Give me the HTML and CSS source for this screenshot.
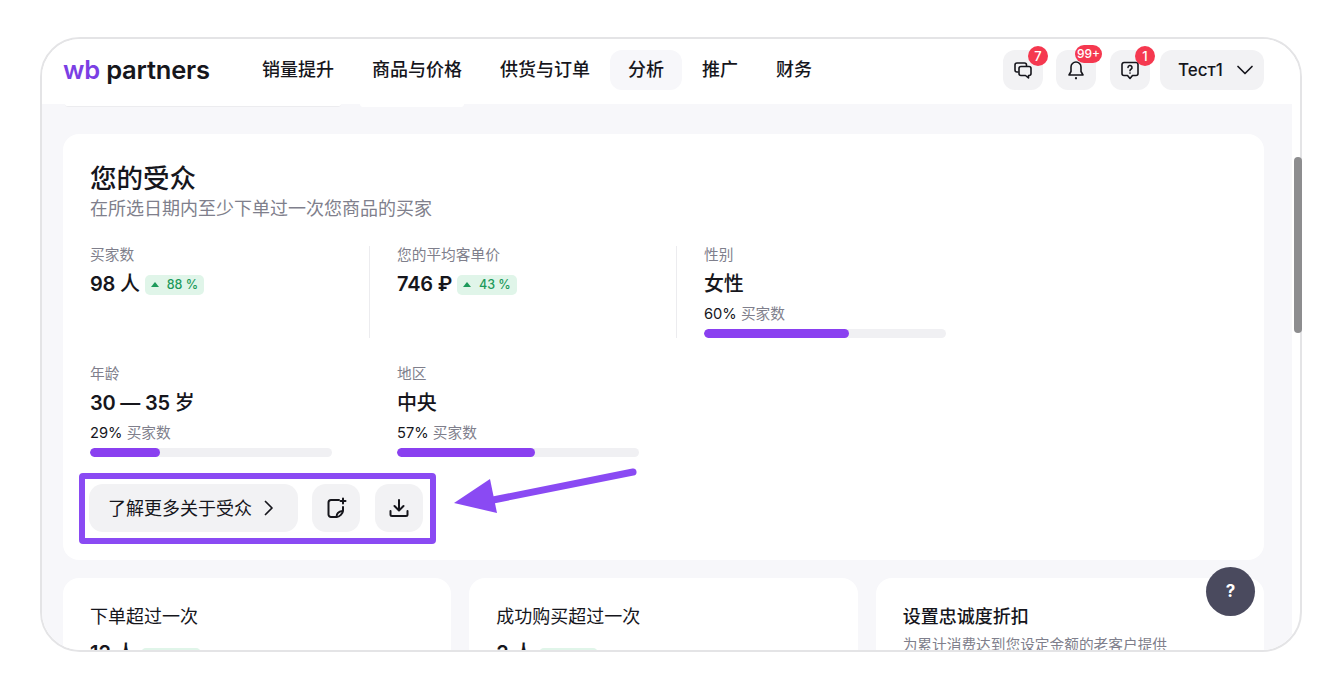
FILE: index.html
```html
<!DOCTYPE html>
<html lang="zh">

<head>
    <meta charset="UTF-8">
    <meta name="viewport" content="width=device-width, initial-scale=1.0">
    <title>WB Partners - 您的受众</title>
    <link rel="stylesheet" href="styles.css">
</head>

<body>
    <div class="window">
        <header class="topbar">
            <div class="logo"><span class="logo-wb">wb</span> partners</div>
            <nav class="nav">
                <a class="nav-item">销量提升</a>
                <a class="nav-item">商品与价格</a>
                <a class="nav-item">供货与订单</a>
                <a class="nav-item active">分析</a>
                <a class="nav-item">推广</a>
                <a class="nav-item">财务</a>
            </nav>
            <div class="top-actions">
                <div class="icon-btn chat-btn">
                    <svg width="20" height="20" viewBox="0 0 20 20" fill="none" stroke="#16161c" stroke-width="1.6" stroke-linejoin="round" stroke-linecap="round">
                        <path d="M13.5 6V5a2 2 0 0 0-2-2H4a2 2 0 0 0-2 2v5a2 2 0 0 0 2 2h1" />
                        <path d="M8 6.5h8a2 2 0 0 1 2 2v5a2 2 0 0 1-2 2h-.5V18l-3-2.500H8a2 2 0 0 1-2-2v-5a2 2 0 0 1 2-2z" />
                    </svg>
                    <span class="badge">7</span>
                </div>
                <div class="icon-btn bell-btn">
                    <svg width="20" height="20" viewBox="0 0 20 20" fill="none" stroke="#16161c" stroke-width="1.6" stroke-linejoin="round" stroke-linecap="round">
                        <path d="M10 2a5 5 0 0 0-5 5v4.500L3 15h14l-2-3.500V7a5 5 0 0 0-5-5z" />
                        <path d="M10 18.200v.1" stroke-width="2.200" />
                    </svg>
                    <span class="badge wide">99+</span>
                </div>
                <div class="icon-btn help-btn">
                    <svg width="20" height="20" viewBox="0 0 20 20" fill="none" stroke="#16161c" stroke-width="1.6" stroke-linejoin="round" stroke-linecap="round">
                        <path d="M4 2.500h12a2 2 0 0 1 2 2v9a2 2 0 0 1-2 2h-3.500L10 18.500l-2.500-3H4a2 2 0 0 1-2-2v-9a2 2 0 0 1 2-2z" />
                        <path d="M8 7.500a2 2 0 1 1 3 1.700c-.7.400-1 .8-1 1.500" />
                        <path d="M10 13v.1" />
                    </svg>
                    <span class="badge">1</span>
                </div>
                <div class="user-btn">
                    <span>Тест1</span>
                    <svg width="18" height="18" viewBox="0 0 18 18" fill="none" stroke="#16161c" stroke-width="1.700" stroke-linecap="round" stroke-linejoin="round">
                        <path d="M2 5.500l7 7 7-7" />
                    </svg>
                </div>
            </div>
        </header>

        <div class="body-row">
            <main class="content">
                <div class="peek-row">
                    <div class="peek first"></div>
                    <div class="peek second"></div>
                </div>

                <section class="card audience">
                    <h2 class="audience-title">您的受众</h2>
                    <p class="audience-sub">在所选日期内至少下单过一次您商品的买家</p>

                    <div class="metrics">
                        <div class="metric divided">
                            <div class="metric-label">买家数</div>
                            <div class="metric-value">98 <span class="unit">人</span> <span class="trend"><i class="arrow-up"></i>88 %</span></div>
                        </div>
                        <div class="metric divided">
                            <div class="metric-label">您的平均客单价</div>
                            <div class="metric-value">746 ₽ <span class="trend"><i class="arrow-up"></i>43 %</span></div>
                        </div>
                        <div class="metric">
                            <div class="metric-label">性别</div>
                            <div class="metric-value"><span class="unit">女性</span></div>
                            <div class="metric-share"><b>60%</b> 买家数</div>
                            <div class="progress"><div class="progress-fill" style="width: 60%"></div></div>
                        </div>
                        <div class="metric">
                            <div class="metric-label">年龄</div>
                            <div class="metric-value">30 — 35 <span class="unit">岁</span></div>
                            <div class="metric-share"><b>29%</b> 买家数</div>
                            <div class="progress"><div class="progress-fill" style="width: 29%"></div></div>
                        </div>
                        <div class="metric">
                            <div class="metric-label">地区</div>
                            <div class="metric-value"><span class="unit">中央</span></div>
                            <div class="metric-share"><b>57%</b> 买家数</div>
                            <div class="progress"><div class="progress-fill" style="width: 57%"></div></div>
                        </div>
                    </div>

                    <div class="highlight">
                        <div class="btn more-btn">
                            <span class="more-text">了解更多关于受众</span>
                            <svg width="14" height="16" viewBox="0 0 14 16" fill="none" stroke="#16161c" stroke-width="1.700" stroke-linecap="round" stroke-linejoin="round">
                                <path d="M3.500 1.500L10 8l-6.500 6.500" />
                            </svg>
                        </div>
                        <div class="btn square note-btn">
                            <svg width="24" height="24" viewBox="0 0 24 24" fill="none" stroke="#16161c" stroke-width="2" stroke-linecap="round" stroke-linejoin="round">
                                <path d="M15 4H7a2.500 2.500 0 0 0-2.500 2.500v12A2.500 2.500 0 0 0 7 21h5.500c3 0 6.500-3.500 6.500-6.500V11" />
                                <path d="M12.500 21c0-3.500 2-5.500 6-6" />
                                <path d="M19 2.500v5M16.500 5h5" />
                            </svg>
                        </div>
                        <div class="btn square dl-btn">
                            <svg width="22" height="22" viewBox="0 0 22 22" fill="none" stroke="#16161c" stroke-width="2" stroke-linecap="round" stroke-linejoin="round">
                                <path d="M11 3v10M6.500 9l4.500 4.500L15.500 9" />
                                <path d="M2.500 14v3.500a1.500 1.500 0 0 0 1.500 1.500h14a1.500 1.500 0 0 0 1.500-1.500V14" />
                            </svg>
                        </div>
                    </div>
                </section>

                <div class="bottom-cards">
                    <section class="card small-card">
                        <h3 class="small-title">下单超过一次</h3>
                        <div class="small-value">12 <span class="unit">人</span> <span class="trend"><i class="arrow-up"></i>50 %</span></div>
                    </section>
                    <section class="card small-card">
                        <h3 class="small-title">成功购买超过一次</h3>
                        <div class="small-value">2 <span class="unit">人</span> <span class="trend"><i class="arrow-up"></i>50 %</span></div>
                    </section>
                    <section class="card small-card">
                        <h3 class="small-title strong">设置忠诚度折扣</h3>
                        <p class="small-sub">为累计消费达到您设定金额的老客户提供</p>
                    </section>
                </div>
            </main>
        </div>

        <div class="help-fab">?</div>
    </div>

    <div class="scroll-thumb"></div>

    <svg class="pointer" width="200" height="60" viewBox="0 0 200 60" fill="none">
        <path d="M181 4L36 33" stroke="#8a4af3" stroke-width="7" stroke-linecap="round" />
        <path d="M2 35L38 11L45 45Z" fill="#8a4af3" />
    </svg>
</body>

</html>
```

FILE: styles.css
```css
* {
    box-sizing: border-box;
}

body {
    margin: 0;
    background: white;
    font-family: Inter, 'Noto Sans CJK SC', sans-serif;
    color: #16161c;
    position: relative;
    height: 688px;
    overflow: hidden;
}

.window {
    position: relative;
    width: 1262px;
    height: 615px;
    margin: 37px 0 0 40px;
    border: 2px solid #e4e4e6;
    border-radius: 40px;
    overflow: hidden;
    background: white;
}

.topbar {
    display: flex;
    align-items: center;
    height: 65px;
    padding: 0 36px 4px 21px;
    background: white;
    position: relative;
}

.logo {
    width: 181px;
    font-size: 25.5px;
    font-weight: 600;
    letter-spacing: -0.2px;
    white-space: nowrap;
}

.logo-wb {
    color: #7b3fe4;
}

.nav {
    display: flex;
    gap: 2px;
}

.nav-item {
    display: block;
    height: 40px;
    padding: 0 18px;
    border-radius: 12px;
    font-size: 18px;
    line-height: 40px;
    font-weight: 500;
}

.nav-item.active {
    background: #f7f7fa;
}

.top-actions {
    display: flex;
    align-items: center;
    margin-left: auto;
}

.icon-btn {
    position: relative;
    display: flex;
    align-items: center;
    justify-content: center;
    width: 40px;
    height: 40px;
    border-radius: 12px;
    background: #f2f2f4;
}

.bell-btn {
    margin-left: 13px;
}

.help-btn {
    margin-left: 14px;
}

.badge {
    position: absolute;
    top: -4px;
    right: -5px;
    min-width: 20px;
    height: 20px;
    border-radius: 10px;
    background: #f5384f;
    color: white;
    font-size: 13px;
    font-weight: 500;
    line-height: 20px;
    text-align: center;
}

.badge.wide {
    top: -5px;
    right: -6px;
    width: 27px;
    min-width: 0;
    height: 18px;
    font-size: 12px;
    line-height: 18px;
}

.user-btn {
    display: flex;
    align-items: center;
    justify-content: space-between;
    width: 104px;
    height: 40px;
    margin-left: 10px;
    padding: 0 10px 0 18px;
    border-radius: 12px;
    background: #f2f2f4;
    font-size: 17px;
    font-weight: 500;
}

.body-row {
    display: flex;
    height: 548px;
    padding-right: 8px;
}

.content {
    width: 1250px;
    padding: 0 28px 0 21px;
    background: #f7f7fa;
    overflow: hidden;
}

.peek-row {
    display: flex;
    height: 30px;
}

.peek {
    height: 3px;
    background: white;
    border-radius: 0 0 12px 12px;
}

.peek.first {
    width: 276px;
    margin-left: 2px;
    border-bottom: 1px solid #ececef;
}

.peek.second {
    width: 104px;
    margin-left: 19px;
}

.card {
    background: white;
    border-radius: 16px;
}

.audience {
    position: relative;
    height: 426px;
    padding: 24px 27px 0;
}

.audience-title {
    margin: 0 0 1px;
    font-size: 26.5px;
    line-height: 40px;
    font-weight: 500;
}

.audience-sub {
    margin: 0;
    font-size: 18px;
    line-height: 20px;
    color: #7f7f8c;
}

.metrics {
    display: grid;
    grid-template-columns: repeat(3, 280px);
    grid-auto-rows: 92px;
    column-gap: 27px;
    row-gap: 27px;
    margin-top: 27px;
}

.metric.divided {
    border-right: 1px solid #ececef;
}

.metric-label {
    font-size: 14.7px;
    line-height: 18px;
    color: #7f7f8c;
}

.metric-value {
    margin-top: 7px;
    font-size: 20px;
    line-height: 26px;
    font-weight: 600;
    letter-spacing: -0.2px;
    white-space: nowrap;
}

.unit {
    font-weight: 500;
}

.trend {
    display: inline-flex;
    align-items: center;
    height: 20px;
    padding: 0 6px;
    border-radius: 5px;
    background: #e0f5e9;
    color: #1d9a5b;
    font-size: 12.5px;
    font-weight: 500;
    line-height: 20px;
    letter-spacing: 0;
    vertical-align: 4px;
}

.arrow-up {
    width: 0;
    height: 0;
    margin-right: 8px;
    border-left: 4px solid transparent;
    border-right: 4px solid transparent;
    border-bottom: 5px solid #1d9a5b;
}

.metric-share {
    margin-top: 8px;
    font-size: 14.7px;
    line-height: 18px;
    color: #7f7f8c;
}

.metric-share b {
    color: #16161c;
    font-weight: 400;
}

.progress {
    width: 242px;
    height: 9px;
    margin-top: 6px;
    border-radius: 5px;
    background: #f0f0f3;
    overflow: hidden;
}

.progress-fill {
    height: 100%;
    border-radius: 5px;
    background: #8a40f0;
}

.highlight {
    display: flex;
    align-items: center;
    width: 357px;
    height: 71px;
    margin: 16px 0 0 -11px;
    padding: 0 7px 2px 4px;
    border: 6px solid #8a4af3;
    border-radius: 4px;
}

.btn {
    display: flex;
    align-items: center;
    height: 48px;
    border-radius: 14px;
    background: #f2f2f4;
    font-size: 18px;
}

.more-btn {
    justify-content: space-between;
    width: 209px;
    padding: 0 22px 0 19px;
}

.more-text {
    padding-bottom: 2px;
}

.square {
    justify-content: center;
    width: 48px;
}

.note-btn {
    margin-left: 14px;
}

.dl-btn {
    margin-left: 15px;
}

.bottom-cards {
    display: flex;
    margin-top: 18px;
    gap: 18px;
}

.small-card {
    flex: 1;
    height: 120px;
    padding: 27px 27px 0;
}

.small-title {
    margin: 0;
    font-size: 18px;
    line-height: 24px;
    font-weight: 400;
}

.small-title.strong {
    font-weight: 500;
}

.small-value {
    margin-top: 11px;
    font-size: 20px;
    line-height: 26px;
    font-weight: 600;
}

.small-value .trend {
    vertical-align: 0;
}

.small-sub {
    margin: 6px 0 0;
    font-size: 14.7px;
    line-height: 20px;
    color: #7f7f8c;
}

.scroll-thumb {
    position: absolute;
    left: 1294px;
    top: 157px;
    width: 8px;
    height: 176px;
    border-radius: 4px;
    background: #8d8d8f;
}

.help-fab {
    position: absolute;
    left: 1164px;
    top: 528px;
    width: 49px;
    height: 49px;
    border-radius: 50%;
    background: #4a4a5e;
    color: white;
    font-size: 17px;
    font-weight: 700;
    line-height: 49px;
    text-align: center;
}

.pointer {
    position: absolute;
    left: 452px;
    top: 468px;
}
```
